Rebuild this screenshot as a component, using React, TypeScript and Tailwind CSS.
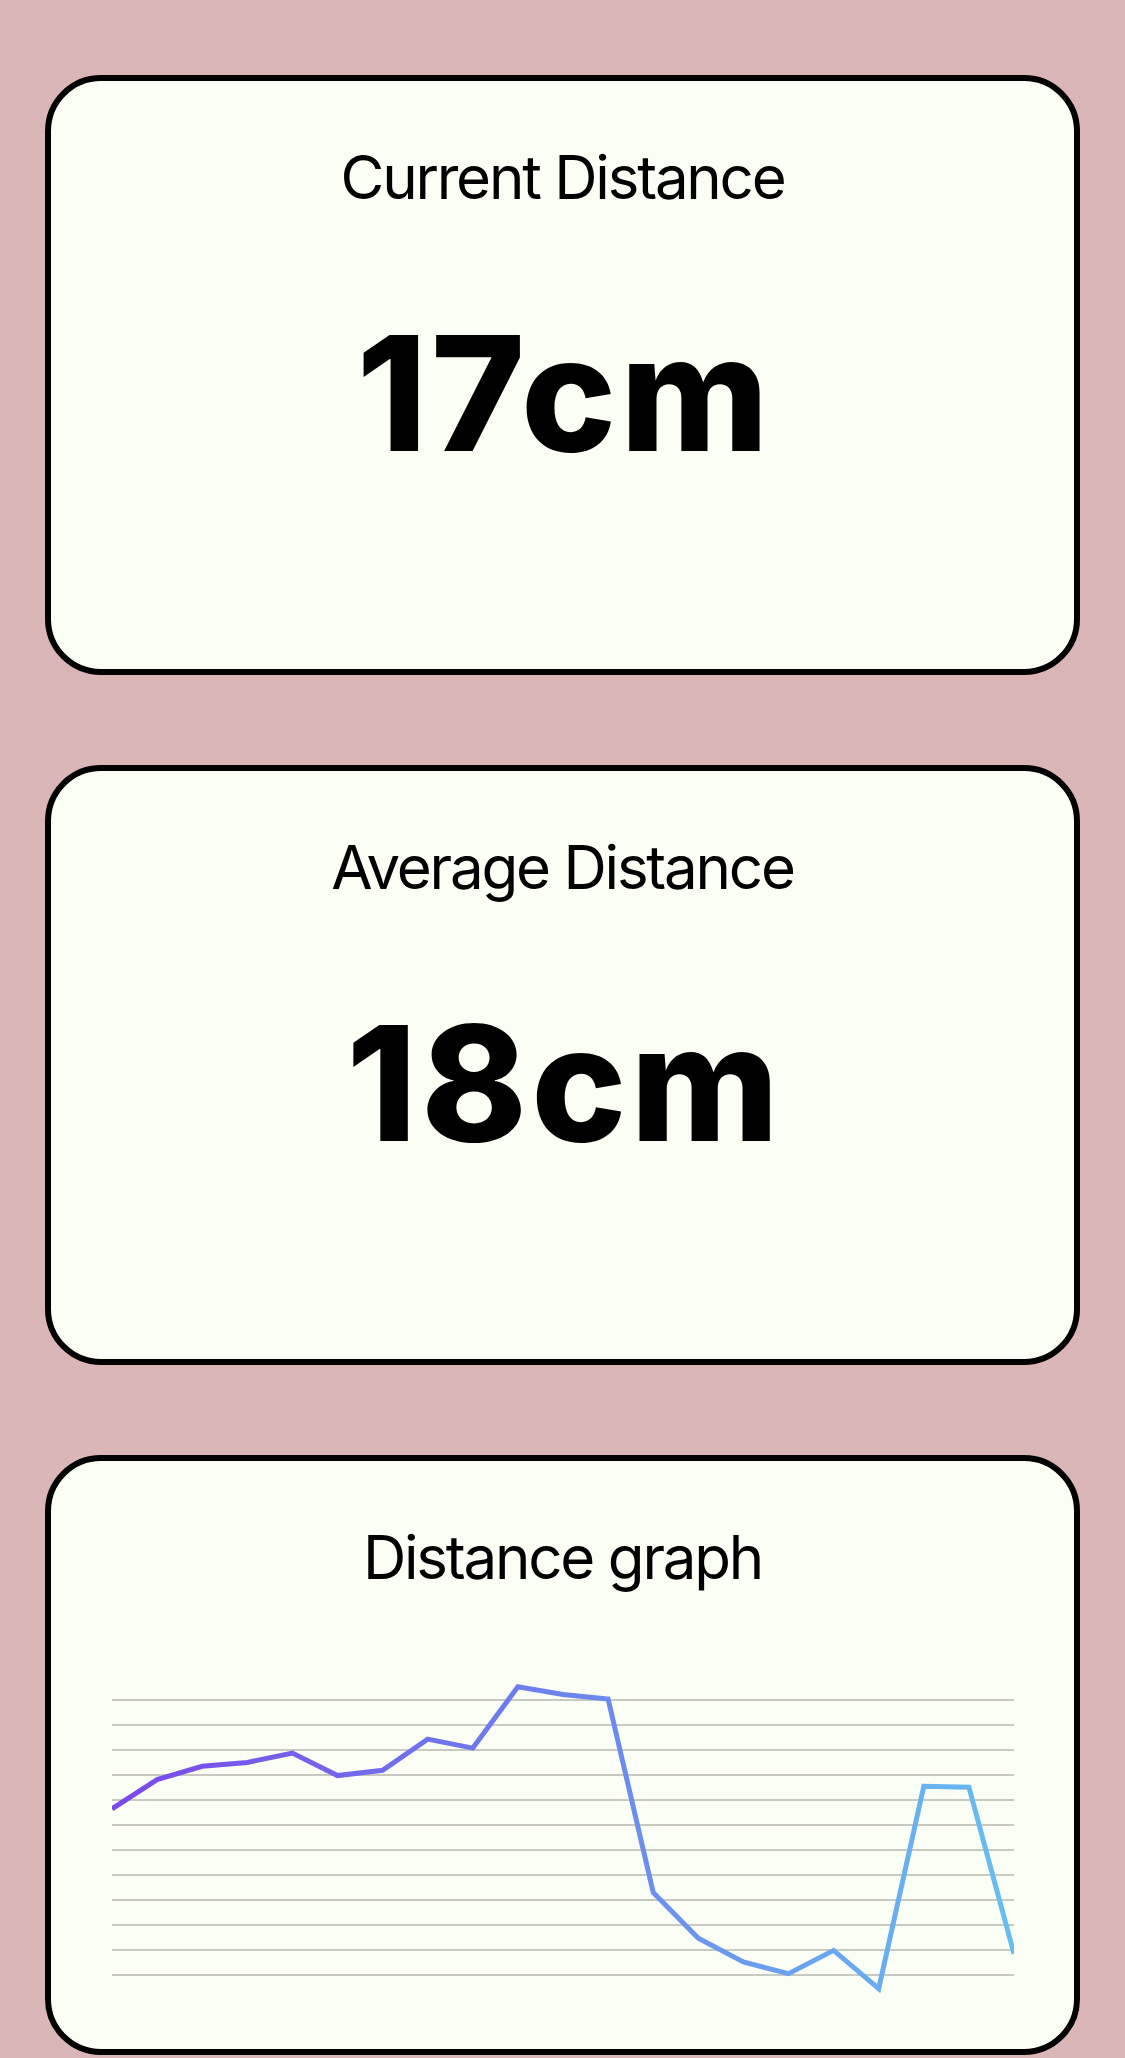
import React from "react";

/* ================= DATA ================= */
const readings = [
  128.8, 99.6, 86.3, 82.4, 73.1, 95.6, 90.3, 59.1, 68.1, 6.7, 14.4, 19, 212.4,
  258.2, 282, 293.7, 270.4, 308.6, 106.2, 107.2, 273.8,
];

const CHART_W = 902;
const CHART_H = 320;

function StatCard({ title, value }: { title: string; value: string }) {
  return (
    <div className="h-[600px] rounded-[56px] border-[6px] border-black bg-[#fbfef5] flex flex-col items-center pt-[66px]">
      <h2 className="text-[60px] leading-none font-normal tracking-[-2.2px]">{title}</h2>
      <p className="mt-[106px] pl-[4px] text-[160px] leading-none font-extrabold tracking-[4px]">
        {value}
      </p>
    </div>
  );
}

function DistanceGraph() {
  const step = CHART_W / (readings.length - 1);
  const points = readings.map((y, i) => `${(i * step).toFixed(1)},${y}`).join(" ");
  const grid = Array.from({ length: 12 }, (_, i) => 20 + i * 25);

  return (
    <div className="h-[600px] rounded-[56px] border-[6px] border-black bg-[#fbfef5] flex flex-col items-center pt-[66px]">
      <h2 className="text-[60px] leading-none font-normal tracking-[-2.2px]">Distance graph</h2>
      <svg
        className="mt-[93px]"
        width={CHART_W}
        height={CHART_H}
        viewBox={`0 0 ${CHART_W} ${CHART_H}`}
      >
        <defs>
          <linearGradient id="line" x1="0" y1="0" x2={CHART_W} y2="0" gradientUnits="userSpaceOnUse">
            <stop offset="0" stopColor="#7b48e8" />
            <stop offset="0.5" stopColor="#6c84ef" />
            <stop offset="1" stopColor="#68bef0" />
          </linearGradient>
        </defs>
        {grid.map((y) => (
          <line key={y} x1="0" x2={CHART_W} y1={y} y2={y} stroke="#c8cac2" strokeWidth="2" />
        ))}
        <polyline
          points={points}
          fill="none"
          stroke="url(#line)"
          strokeWidth="5"
          strokeLinejoin="miter"
        />
      </svg>
    </div>
  );
}

export default function App() {
  return (
    <div
      className="min-h-screen bg-[#dab6b6] px-[45px] pt-[75px] pb-[60px] flex flex-col gap-[90px] text-black"
      style={{ fontFamily: "Inter, 'Noto Sans', sans-serif" }}
    >
      <StatCard title="Current Distance" value="17cm" />
      <StatCard title="Average Distance" value="18cm" />
      <DistanceGraph />
    </div>
  );
}
